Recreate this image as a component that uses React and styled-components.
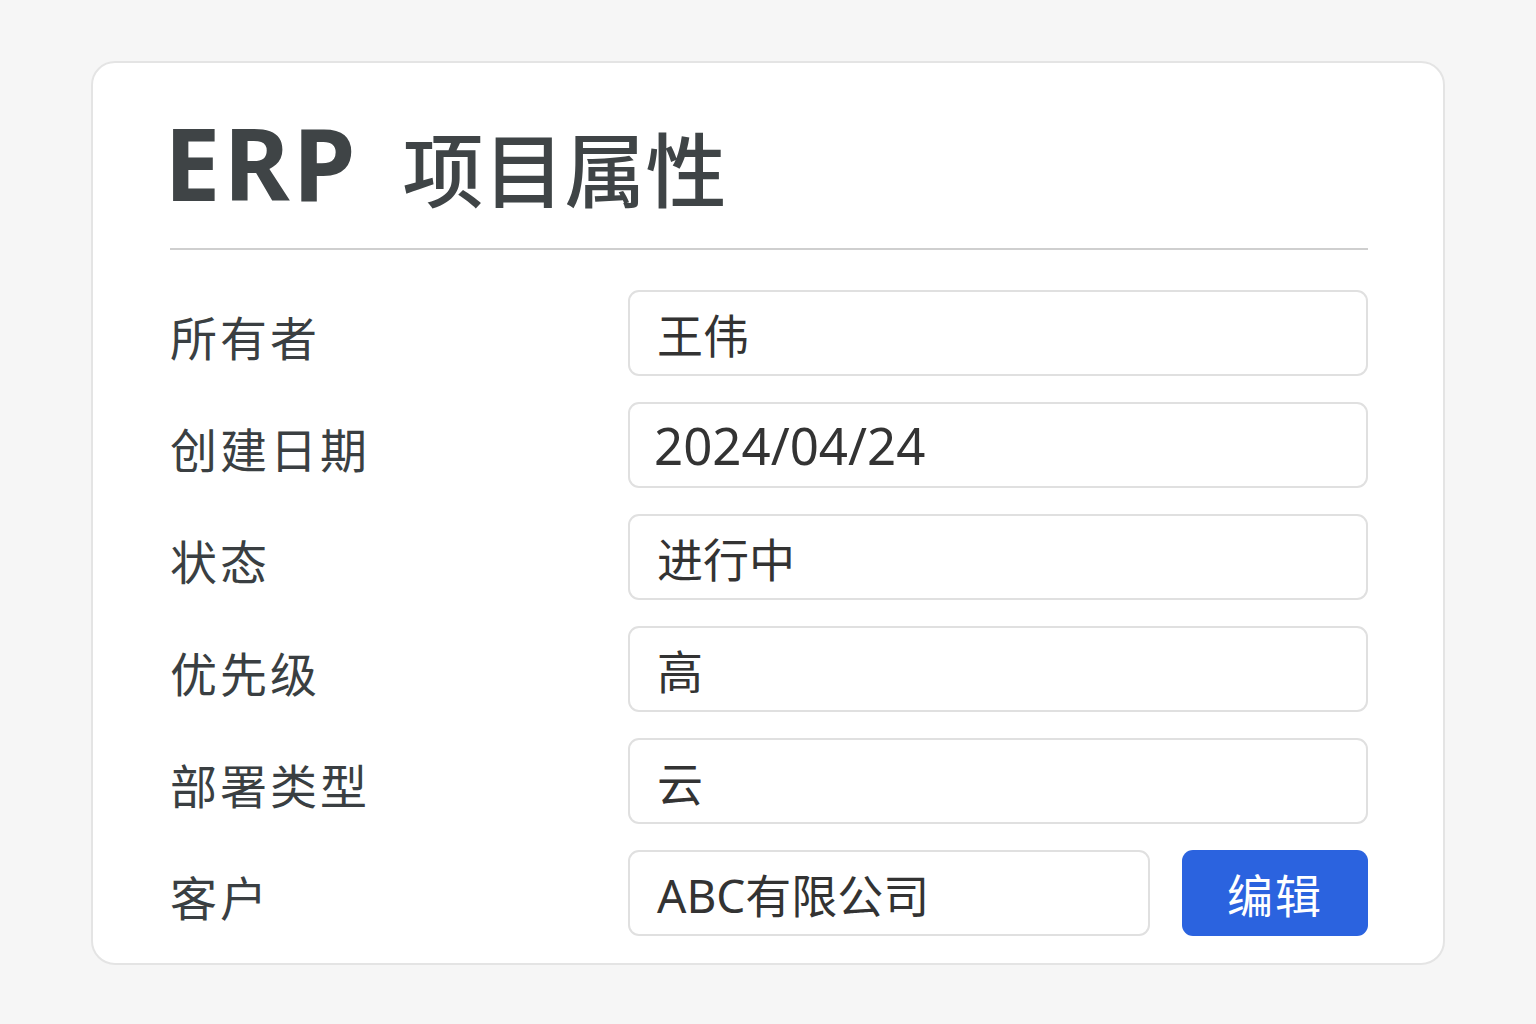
import React from "react";
import styled, { createGlobalStyle } from "styled-components";

const Global = createGlobalStyle`
  html, body { margin: 0; padding: 0; background: #f6f6f6; }
  body { font-family: "Noto Sans", "Noto Sans CJK SC", sans-serif; }
`;

const Page = styled.div`
  width: 1536px;
  height: 1024px;
  box-sizing: border-box;
  padding: 61px 0 0 91px;
`;

const Card = styled.section`
  width: 1354px;
  height: 904px;
  box-sizing: border-box;
  background: #fff;
  border: 2px solid #e4e4e4;
  border-radius: 24px;
  padding: 39px 75px 0 77px;
  display: flex;
  flex-direction: column;
`;

const Title = styled.h1`
  margin: 0;
  display: flex;
  align-items: baseline;
  gap: 44px;
  color: #3f4446;
  line-height: 120px;
`;

const Latin = styled.span`
  font-family: "Noto Sans", sans-serif;
  font-weight: 700;
  font-size: 101px;
  letter-spacing: 3px;
  margin-left: -6px;
`;

const Cjk = styled.span`
  font-family: "Noto Sans CJK SC", sans-serif;
  font-weight: 500;
  font-size: 81px;
  letter-spacing: 0px;
`;

const Divider = styled.hr`
  margin: 22px 0 40px 0;
  border: none;
  height: 2px;
  background: #cfcfcf;
`;

const Grid = styled.div`
  display: grid;
  grid-template-columns: 458px 1fr;
  row-gap: 26px;
  align-items: center;
`;

const Label = styled.div`
  font-family: "Noto Sans CJK SC", sans-serif;
  font-size: 47px;
  letter-spacing: 3px;
  color: #3a3f42;
  padding-top: 4px;
`;

const Field = styled.div`
  height: 86px;
  box-sizing: border-box;
  border: 2px solid #e0e0e0;
  border-radius: 11px;
  display: flex;
  align-items: center;
  padding-left: ${(p) => (p.$num ? "24px" : "27px")};
  font-family: "Noto Sans", "Noto Sans CJK SC", sans-serif;
  font-size: ${(p) => (p.$num ? "51px" : "46px")};
  color: #333;
  flex: 1;
`;

const Split = styled.div`
  display: flex;
  gap: 32px;
  align-items: center;
`;

const Button = styled.button`
  width: 186px;
  height: 86px;
  border: none;
  border-radius: 11px;
  background: #2b63df;
  color: #fff;
  font-family: "Noto Sans CJK SC", sans-serif;
  font-size: 46px;
  letter-spacing: 2px;
  cursor: pointer;
`;

const rows = [
  ["所有者", "王伟"],
  ["创建日期", "2024/04/24", true],
  ["状态", "进行中"],
  ["优先级", "高"],
  ["部署类型", "云"],
];

export default function App() {
  return (
    <Page>
      <Global />
      <Card>
        <Title>
          <Latin>ERP</Latin>
          <Cjk>项目属性</Cjk>
        </Title>
        <Divider />
        <Grid>
          {rows.map(([l, v, num]) => (
            <React.Fragment key={l}>
              <Label>{l}</Label>
              <Field $num={num}>{v}</Field>
            </React.Fragment>
          ))}
          <Label>客户</Label>
          <Split>
            <Field>ABC有限公司</Field>
            <Button>编辑</Button>
          </Split>
        </Grid>
      </Card>
    </Page>
  );
}
